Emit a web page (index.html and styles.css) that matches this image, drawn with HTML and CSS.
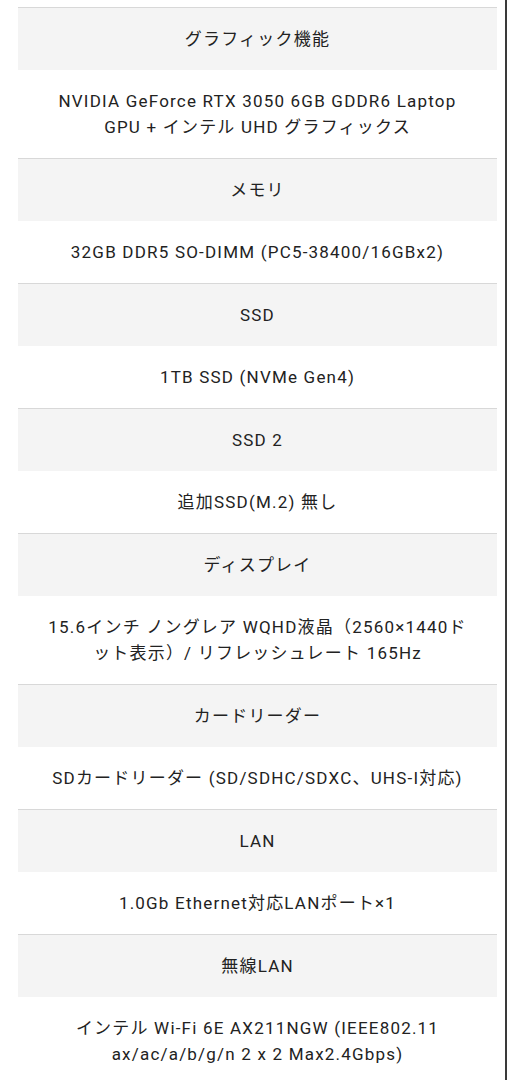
FILE: index.html
```html
<!DOCTYPE html>
<html lang="ja">
<head>
<meta charset="utf-8">
<link rel="stylesheet" href="styles.css">
</head>
<body>
<div class="frame">
  <table class="spec">
    <tbody>
      <tr><th>グラフィック機能</th></tr>
      <tr><td>NVIDIA GeForce RTX 3050 6GB GDDR6 Laptop GPU + インテル UHD グラフィックス</td></tr>
      <tr><th>メモリ</th></tr>
      <tr><td>32GB DDR5 SO-DIMM (PC5-38400/16GBx2)</td></tr>
      <tr><th>SSD</th></tr>
      <tr><td>1TB SSD (NVMe Gen4)</td></tr>
      <tr><th>SSD 2</th></tr>
      <tr><td>追加SSD(M.2) 無し</td></tr>
      <tr><th>ディスプレイ</th></tr>
      <tr><td>15.6インチ ノングレア WQHD液晶（2560×1440ドット表示）/ リフレッシュレート 165Hz</td></tr>
      <tr><th>カードリーダー</th></tr>
      <tr><td>SDカードリーダー (SD/SDHC/SDXC、UHS-I対応)</td></tr>
      <tr><th>LAN</th></tr>
      <tr><td>1.0Gb Ethernet対応LANポート×1</td></tr>
      <tr><th>無線LAN</th></tr>
      <tr><td>インテル Wi-Fi 6E AX211NGW (IEEE802.11 ax/ac/a/b/g/n 2 x 2 Max2.4Gbps)</td></tr>
    </tbody>
  </table>
</div>
</body>
</html>
```
FILE: styles.css
```css
html, body {
  margin: 0;
  padding: 0;
  background: #fff;
}
body {
  font-family: Roboto, "Noto Sans CJK JP", sans-serif;
  color: #222;
}
.frame {
  width: 507px;
  min-height: 1080px;
  border-right: 2px solid #3a3a3a;
  box-sizing: border-box;
  padding: 7px 0 0 18px;
}
.spec {
  width: 479px;
  border-collapse: collapse;
  border-top: 1px solid #d8d8d8;
}
.spec th,
.spec td {
  font-size: 17px;
  font-weight: 400;
  line-height: 26px;
  letter-spacing: 1.2px;
  text-align: center;
  padding: 18px 25px;
}
.spec th {
  background: #f4f4f4;
}
.spec td {
  background: #fff;
  border-bottom: 1px solid #d8d8d8;
}
```
